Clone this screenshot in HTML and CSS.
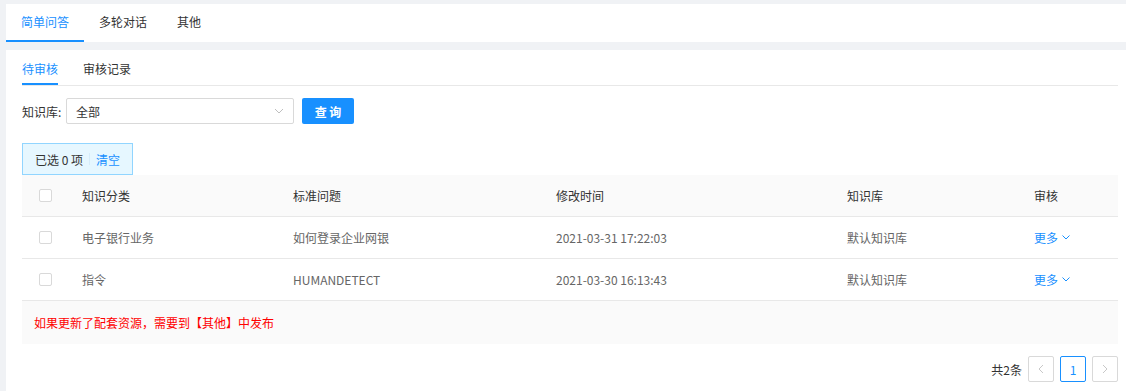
FILE: index.html
```html
<!DOCTYPE html>
<html lang="zh-CN">
<head>
    <meta charset="UTF-8">
    <title>审核</title>
    <link rel="stylesheet" href="styles.css">
</head>
<body>
<div class="page">
    <div class="top-card">
        <a class="main-tab active">简单问答</a>
        <a class="main-tab">多轮对话</a>
        <a class="main-tab">其他</a>
    </div>

    <div class="card">
        <div class="sub-tabs">
            <a class="sub-tab active">待审核</a>
            <a class="sub-tab">审核记录</a>
        </div>

        <form class="filter">
            <label class="filter-label" for="kb">知识库:</label>
            <div class="select" id="kb">
                <span>全部</span>
                <svg class="select-arrow" width="10" height="6" viewBox="0 0 10 6"><path d="M1 1 L5 5 L9 1" fill="none" stroke="#bfbfbf" stroke-width="1"/></svg>
            </div>
            <button type="button" class="btn-primary">查 询</button>
        </form>

        <div class="alert">
            <span>已选 0 项</span>
            <span class="alert-sep"></span>
            <a class="link">清空</a>
        </div>

        <table class="grid">
            <colgroup>
                <col style="width:44px">
                <col style="width:211px">
                <col style="width:263px">
                <col style="width:291px">
                <col style="width:187px">
                <col style="width:100px">
            </colgroup>
            <thead>
                <tr>
                    <th class="check-cell"><span class="checkbox"></span></th>
                    <th>知识分类</th>
                    <th>标准问题</th>
                    <th>修改时间</th>
                    <th>知识库</th>
                    <th>审核</th>
                </tr>
            </thead>
            <tbody>
                <tr>
                    <td class="check-cell"><span class="checkbox"></span></td>
                    <td>电子银行业务</td>
                    <td>如何登录企业网银</td>
                    <td>2021-03-31 17:22:03</td>
                    <td>默认知识库</td>
                    <td><a class="link more">更多<svg width="8" height="5" viewBox="0 0 8 5"><path d="M0.5 0.5 L4 4 L7.5 0.5" fill="none" stroke="#1890ff" stroke-width="1"/></svg></a></td>
                </tr>
                <tr>
                    <td class="check-cell"><span class="checkbox"></span></td>
                    <td>指令</td>
                    <td>HUMANDETECT</td>
                    <td>2021-03-30 16:13:43</td>
                    <td>默认知识库</td>
                    <td><a class="link more">更多<svg width="8" height="5" viewBox="0 0 8 5"><path d="M0.5 0.5 L4 4 L7.5 0.5" fill="none" stroke="#1890ff" stroke-width="1"/></svg></a></td>
                </tr>
            </tbody>
        </table>
        <div class="grid-footer">如果更新了配套资源，需要到【其他】中发布</div>

        <div class="pager">
            <span class="pager-total">共2条</span>
            <a class="pager-item disabled"><svg width="6" height="10" viewBox="0 0 6 10"><path d="M5 1 L1 5 L5 9" fill="none" stroke="#c8c8c8" stroke-width="1"/></svg></a>
            <a class="pager-item current">1</a>
            <a class="pager-item disabled"><svg width="6" height="10" viewBox="0 0 6 10"><path d="M1 1 L5 5 L1 9" fill="none" stroke="#c8c8c8" stroke-width="1"/></svg></a>
        </div>
    </div>
</div>
</body>
</html>
```

FILE: styles.css
```css
body {
    margin: 0;
    background-color: #f0f2f5;
    font-family: "Noto Sans CJK SC", sans-serif;
    font-size: 12px;
    color: #333;
    overflow: hidden;
}
a {
    text-decoration: none;
    cursor: pointer;
}
.page {
    padding: 4px 0 0 6px;
}
.top-card {
    background-color: #fff;
    display: flex;
    height: 38px;
    margin-bottom: 8px;
}
.main-tab {
    padding: 0 15px;
    line-height: 36px;
    border-bottom: 2px solid transparent;
    color: #333;
}
.main-tab.active {
    color: #1890ff;
    border-bottom-color: #1890ff;
}
.card {
    background-color: #fff;
    padding: 0 8px 20px 16px;
    min-height: 321px;
}
.sub-tabs {
    display: flex;
    gap: 25px;
    border-bottom: 1px solid #e8e8e8;
}
.sub-tab {
    padding-top: 5px;
    line-height: 28px;
    border-bottom: 2px solid transparent;
    color: #333;
}
.sub-tab.active {
    color: #1890ff;
    border-bottom-color: #1890ff;
}
.filter {
    display: flex;
    align-items: center;
    margin: 12px 0 0;
    height: 26px;
}
.filter-label {
    width: 44px;
    color: #333;
}
.select {
    box-sizing: border-box;
    width: 228px;
    height: 26px;
    border: 1px solid #d9d9d9;
    border-radius: 2px;
    padding: 0 9px;
    display: flex;
    align-items: center;
    justify-content: space-between;
    color: #333;
}
.btn-primary {
    margin-left: 8px;
    width: 52px;
    height: 26px;
    border: none;
    border-radius: 2px;
    background-color: #1890ff;
    color: #fff;
    font-family: inherit;
    font-size: 12px;
    font-weight: bold;
    padding: 0;
}
.alert {
    box-sizing: border-box;
    display: inline-flex;
    align-items: center;
    height: 32px;
    margin-top: 19px;
    padding: 0 12px;
    border: 1px solid #91d5ff;
    background-color: #e6f7ff;
    color: #333;
}
.alert-sep {
    width: 1px;
    height: 12px;
    background-color: #d6ecfa;
    margin: 0 6px;
}
.link {
    color: #1890ff;
}
.grid {
    width: 1096px;
    border-collapse: collapse;
    table-layout: fixed;
}
.grid th,
.grid td {
    height: 41px;
    padding: 0 0 0 16px;
    text-align: left;
    border-bottom: 1px solid #e8e8e8;
    white-space: nowrap;
}
.grid th {
    background-color: #fafafa;
    font-weight: normal;
    color: #333;
}
.grid td {
    color: #666;
}
.grid .check-cell {
    padding-left: 17px;
}
.checkbox {
    display: block;
    box-sizing: border-box;
    width: 13px;
    height: 13px;
    border: 1px solid #d9d9d9;
    border-radius: 2px;
    background-color: #fff;
}
.more {
    display: inline-flex;
    align-items: center;
    gap: 4px;
}
.grid-footer {
    height: 43px;
    line-height: 43px;
    padding-left: 12px;
    background-color: #fafafa;
    color: #f00;
}
.pager {
    display: flex;
    justify-content: flex-end;
    align-items: center;
    gap: 6px;
    margin-top: 12px;
}
.pager-total {
    color: #333;
}
.pager-item {
    box-sizing: border-box;
    width: 26px;
    height: 26px;
    border: 1px solid #d9d9d9;
    border-radius: 2px;
    display: flex;
    align-items: center;
    justify-content: center;
    color: #333;
}
.pager-item.current {
    border-color: #1890ff;
    color: #1890ff;
}
```
